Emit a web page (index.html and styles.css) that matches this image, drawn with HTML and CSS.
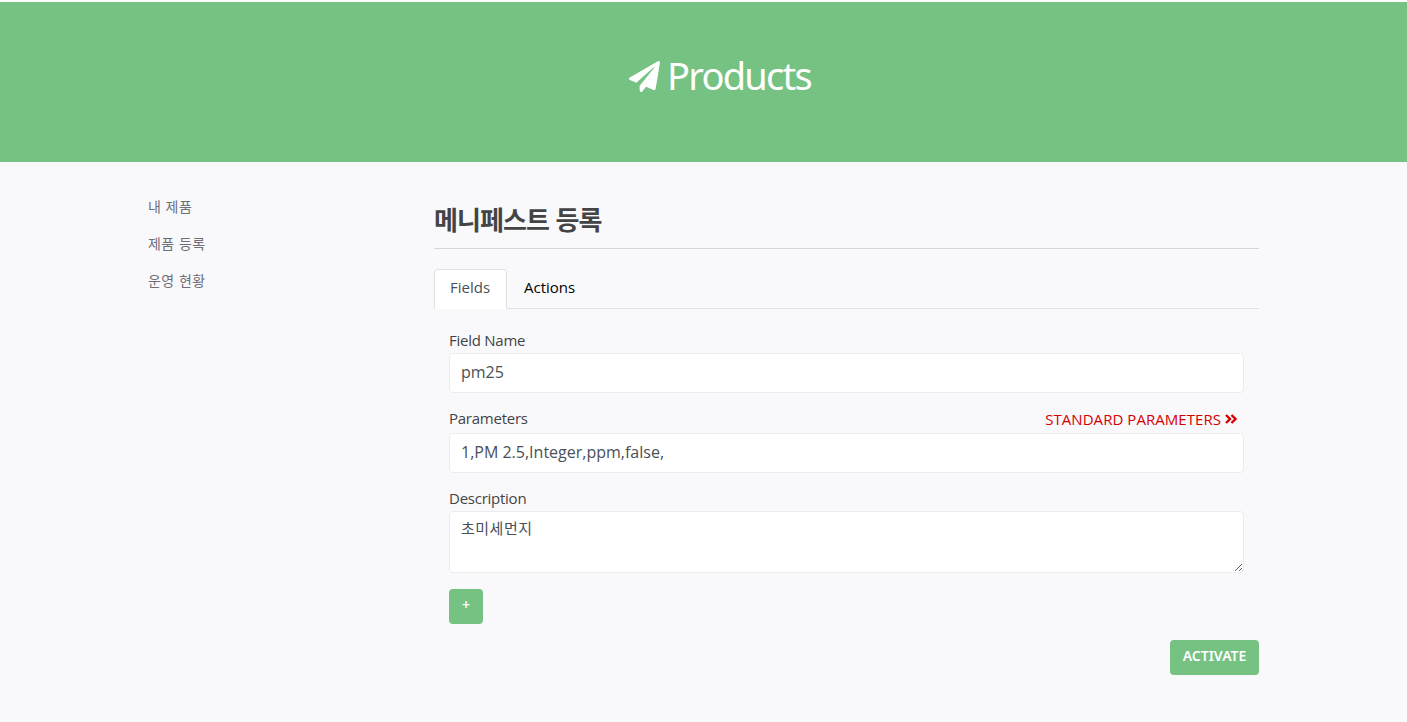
FILE: index.html
```html
<!DOCTYPE html>
<html lang="ko">
<head>
<meta charset="utf-8">
<title>Products</title>
<link rel="stylesheet" href="styles.css">
</head>
<body>
<header class="hero">
  <h1 class="hero-title">
    <svg class="plane" viewBox="0 0 512 512" fill="currentColor"><path d="M476 3.200 12.500 270.600c-18.100 10.400-15.800 35.600 2.200 43.200L121 358.400l287.300-253.200c5.500-4.900 13.300 2.600 8.600 8.300L176 407v80.500c0 23.600 28.500 32.900 42.500 15.800L282 426l124.600 52.200c14.200 6 30.400-2.900 33-18.200l72-432C515 7.800 493.300-6.800 476 3.200z"/></svg>
    <span>Products</span>
  </h1>
</header>
<div class="container">
  <nav class="side">
    <a class="side-link">내 제품</a>
    <a class="side-link">제품 등록</a>
    <a class="side-link">운영 현황</a>
  </nav>
  <main class="main">
    <h2 class="title"><span>메니페스트 등록</span></h2>
    <div class="tabs">
      <a class="tab active">Fields</a>
      <a class="tab">Actions</a>
    </div>
    <form class="form">
      <div class="label-row"><label>Field Name</label></div>
      <input class="control" type="text" value="pm25">
      <div class="label-row second">
        <label>Parameters</label>
        <a class="standard"><span>STANDARD PARAMETERS</span><svg class="chevrons" viewBox="0 0 12 10" fill="none" stroke="currentColor" stroke-width="2.400"><path d="M1 1l4 4-4 4M6.500 1l4 4-4 4"/></svg></a>
      </div>
      <input class="control params" type="text" value="1,PM 2.5,Integer,ppm,false,">
      <div class="label-row third"><label>Description</label></div>
      <textarea class="control area">초미세먼지</textarea>
      <button class="btn add" type="button">+</button>
    </form>
    <button class="btn activate" type="button">ACTIVATE</button>
  </main>
</div>
</body>
</html>
```
FILE: styles.css
```css
* { box-sizing: border-box; }
body {
  margin: 0;
  padding-top: 2px;
  height: 722px;
  overflow: hidden;
  background: linear-gradient(#fff 2px, #f9f9fc 2px);
  color: #444;
  font-family: "Open Sans", "Noto Sans CJK KR", sans-serif;
  font-size: 15px;
}
.hero {
  height: 160px;
  background: #75c282;
  color: #fff;
  padding: 44px 0 0 629px;
}
.hero-title {
  margin: 0;
  display: flex;
  align-items: center;
  gap: 7px;
  height: 60px;
  font-family: "Noto Sans", sans-serif;
  font-size: 38px;
  font-weight: 400;
  line-height: 58px;
  letter-spacing: -1.750px;
}
.plane { width: 31px; height: 31px; }
.hero-title span { margin-top: -2px; }
.container {
  display: flex;
  width: 1111px;
  margin-left: 148px;
}
.side {
  width: 286px;
  padding-top: 26px;
  display: flex;
  flex-direction: column;
}
.side-link {
  height: 37px;
  line-height: 37px;
  font-family: "Noto Sans CJK KR", sans-serif;
  font-size: 14px;
  letter-spacing: 0.400px;
  color: #6c6f78;
}
.main { width: 825px; display: flex; flex-direction: column; }
.title {
  margin: 0 0 20px;
  height: 87px;
  padding-top: 37px;
  border-bottom: 1px solid #d6d6da;
  font-family: "Noto Sans CJK KR", sans-serif;
  font-size: 26px;
  font-weight: 700;
  line-height: 40px;
  letter-spacing: -0.900px;
}
.tabs { display: flex; height: 40px; border-bottom: 1px solid #dee2e6; }
.tab {
  height: 40px;
  padding: 0 16px;
  border: 1px solid transparent;
  line-height: 35px;
  color: #000;
}
.tab.active {
  width: 73px;
  padding-left: 15px;
  background: #fff;
  border-color: #dee2e6 #dee2e6 #fff;
  border-radius: 4px 4px 0 0;
  color: #495057;
}
.form { display: flex; flex-direction: column; padding: 22px 15px 0; }
.label-row {
  display: flex;
  justify-content: space-between;
  height: 22px;
  line-height: 18px;
  letter-spacing: -0.250px;
}
.second { margin-top: 16px; height: 24px; }
.third { margin-top: 16px; }
.control {
  width: 795px;
  height: 40px;
  margin: 0;
  padding: 0 12px 2px 11px;
  border: 1px solid #ececf0;
  border-radius: 4px;
  background: #fff;
  color: #495057;
  font-family: "Open Sans", "Noto Sans CJK KR", sans-serif;
  font-size: 16px;
  outline: none;
}
.area {
  height: 62px;
  padding-top: 4px;
  font-size: 15px;
  line-height: 24px;
  letter-spacing: 0.500px;
  resize: vertical;
}
.standard {
  display: flex;
  align-items: center;
  gap: 4px;
  height: 20px;
  padding-right: 7px;
  color: #d50000;
  letter-spacing: 0.050px;
}
.chevrons { width: 12px; height: 10px; }
.btn {
  height: 35px;
  padding: 0 0 4px;
  border: 0;
  border-radius: 4px;
  background: #75c282;
  color: #fff;
  font-family: "Noto Sans", sans-serif;
  font-size: 14px;
  font-weight: 600;
}
.add { width: 34px; margin-top: 16px; }
.activate { width: 89px; margin-top: 16px; align-self: flex-end; }
```
